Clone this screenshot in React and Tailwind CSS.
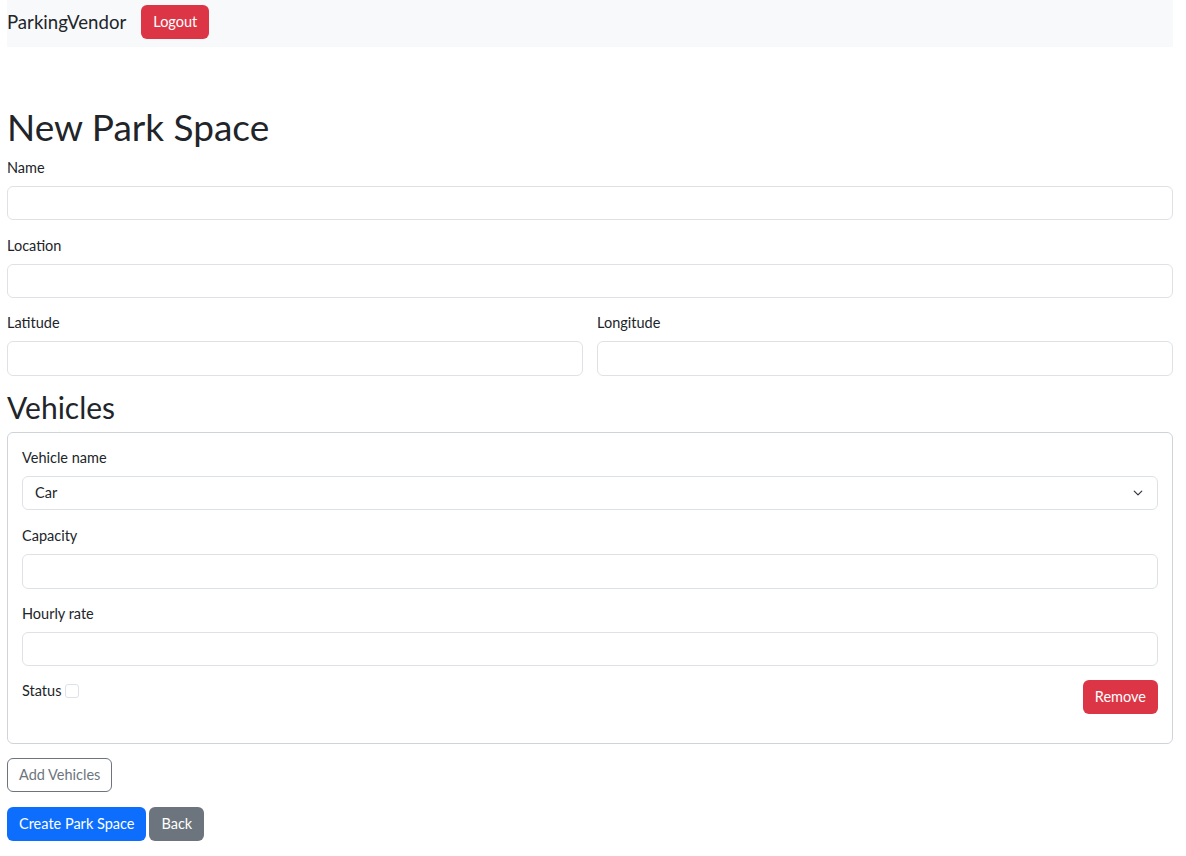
export default function App() {
  return (
    <div className="min-h-screen bg-white pl-[7px] pr-[13px] text-[#212529] font-['Lato',sans-serif]">
      <nav className="flex h-[47px] items-start gap-[15px] bg-[#f8f9fa] pt-[5px]">
        <span className="text-[18.6px] leading-[34px]">ParkingVendor</span>
        <button className="h-[34px] rounded-[6px] bg-[#dc3545] px-3 text-[14.5px] text-white">
          Logout
        </button>
      </nav>

      <h1 className="mt-[56px] mb-[6px] text-[37px] leading-[48px]">New Park Space</h1>

      <form className="text-[14.5px]">
        <div className="mb-[15px]">
          <label className="mb-2 block leading-[21px]">Name</label>
          <input className="block h-[34px] w-full rounded-[6px] border border-[#dee2e6] px-3" />
        </div>
        <div className="mb-[14px]">
          <label className="mb-2 block leading-[21px]">Location</label>
          <input className="block h-[34px] w-full rounded-[6px] border border-[#dee2e6] px-3" />
        </div>
        <div className="grid grid-cols-2 gap-[14px]">
          <div>
            <label className="mb-2 block leading-[21px]">Latitude</label>
            <input className="block h-[35px] w-full rounded-[6px] border border-[#dee2e6] px-3" />
          </div>
          <div>
            <label className="mb-2 block leading-[21px]">Longitude</label>
            <input className="block h-[35px] w-full rounded-[6px] border border-[#dee2e6] px-3" />
          </div>
        </div>

        <h2 className="mt-[12px] mb-[6px] text-[30px] leading-[38px]">Vehicles</h2>

        <div className="rounded-[6px] border border-[#ced4da] p-[14px]">
          <div className="mb-[15px]">
            <label className="mb-2 block leading-[21px]">Vehicle name</label>
            <div className="relative">
              <select className="block h-[34px] w-full appearance-none rounded-[6px] border border-[#dee2e6] bg-white px-3">
                <option>Car</option>
              </select>
              <svg
                className="pointer-events-none absolute right-[14px] top-[12px]"
                width="12"
                height="10"
                viewBox="0 0 16 16"
                fill="none"
                stroke="#343a40"
                strokeWidth="2"
                strokeLinecap="round"
                strokeLinejoin="round"
              >
                <path d="m2 5 6 6 6-6" />
              </svg>
            </div>
          </div>
          <div className="mb-[14px]">
            <label className="mb-2 block leading-[21px]">Capacity</label>
            <input className="block h-[35px] w-full rounded-[6px] border border-[#dee2e6] px-3" />
          </div>
          <div className="mb-[14px]">
            <label className="mb-2 block leading-[21px]">Hourly rate</label>
            <input className="block h-[34px] w-full rounded-[6px] border border-[#dee2e6] px-3" />
          </div>
          <div className="mb-[15px] flex items-start justify-between">
            <div className="flex items-center gap-[4px] leading-[21px]">
              <span>Status</span>
              <span className="inline-block h-[14px] w-[14px] rounded-[3px] border border-[#dee2e6]"></span>
            </div>
            <button type="button" className="h-[34px] rounded-[6px] bg-[#dc3545] px-3 text-white">
              Remove
            </button>
          </div>
        </div>

        <button
          type="button"
          className="mt-[14px] block h-[34px] rounded-[6px] border border-[#6c757d] px-[11px] text-[#6c757d]"
        >
          Add Vehicles
        </button>

        <div className="mt-[15px] flex gap-[3px]">
          <button type="button" className="h-[34px] rounded-[6px] bg-[#0d6efd] px-3 text-white">
            Create Park Space
          </button>
          <button type="button" className="h-[34px] rounded-[6px] bg-[#6c757d] px-3 text-white">
            Back
          </button>
        </div>
      </form>
    </div>
  );
}
